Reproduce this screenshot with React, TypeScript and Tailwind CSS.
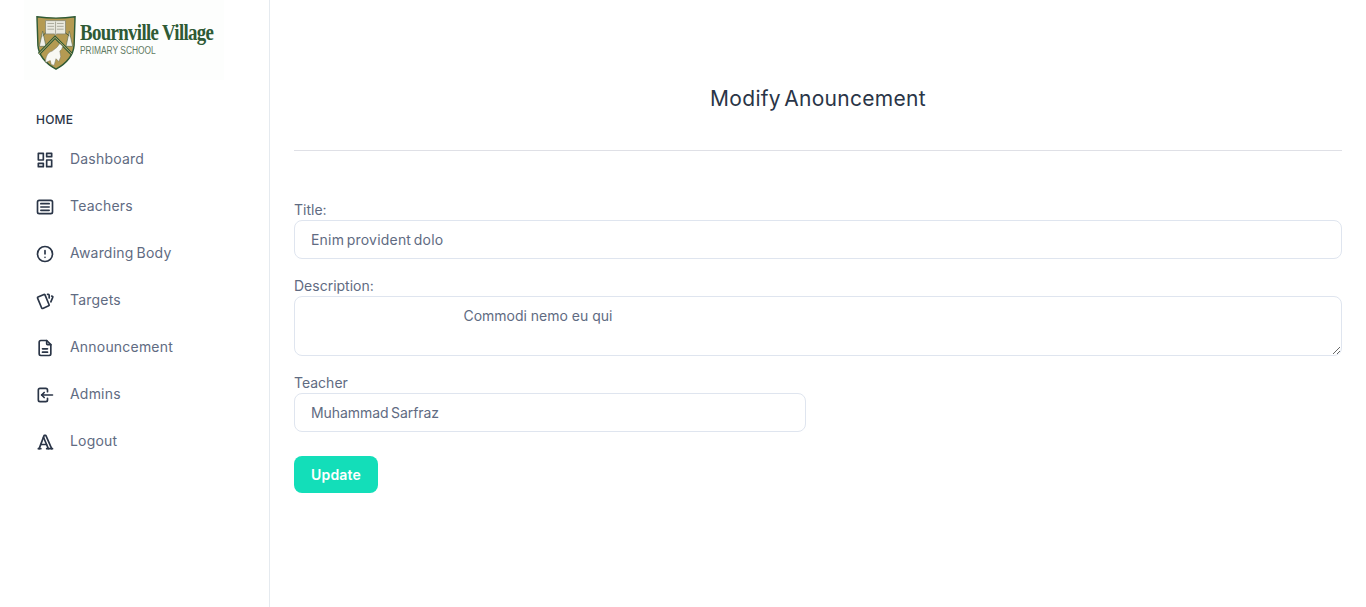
import React from 'react';
import {
  TbAlertCircle,
  TbArticle,
  TbCards,
  TbFileDescription,
  TbLogin,
  TbTypography,
} from 'react-icons/tb';

const DashboardIcon = ({ className }: { className?: string }) => (
  <svg viewBox="0 0 24 24" fill="none" stroke="currentColor" strokeWidth="2" strokeLinecap="round" strokeLinejoin="round" className={className}>
    <path d="M4 4h6v8h-6z" />
    <path d="M4 16h6v4h-6z" />
    <path d="M14 12h6v8h-6z" />
    <path d="M14 4h6v4h-6z" />
  </svg>
);

const menu = [
  { label: 'Dashboard', icon: DashboardIcon },
  { label: 'Teachers', icon: TbArticle },
  { label: 'Awarding Body', icon: TbAlertCircle },
  { label: 'Targets', icon: TbCards },
  { label: 'Announcement', icon: TbFileDescription },
  { label: 'Admins', icon: TbLogin },
  { label: 'Logout', icon: TbTypography },
];

const Crest = () => (
  <svg width="40" height="58" viewBox="0 1 42 57" className="shrink-0">
    {/* shield */}
    <path d="M1 2 C12 3.500 30 3.500 41 2 L40 32 C39 44 30 52 21 57 C12 52 3 44 2 32 Z" fill="#b49a52" stroke="#2f5a35" strokeWidth="1.500" />
    {/* book */}
    <path d="M10 6 H31 V20 H21.500 L20.500 21.500 L19.500 20 H10 Z" fill="#e9e9df" stroke="#85856f" strokeWidth="0.800" />
    <path d="M12 9 H19 M12 12 H19 M12 15 H19 M22 9 H29 M22 12 H29 M22 15 H29 M20.500 7 V20" stroke="#a2a292" strokeWidth="0.900" />
    {/* tassels */}
    <path d="M7 17 L10.500 33 H3.500 Z M35 17 L38.500 33 H31.500 Z" fill="#f1f1ea" stroke="#5c6d50" strokeWidth="0.700" />
    <path d="M10 19 L7 22 M31 19 L35 22" stroke="#4a5a3c" strokeWidth="1" />
    {/* chevron */}
    <path d="M3 41 L20 23.500 L37.500 41" fill="none" stroke="#2f5a35" strokeWidth="3" />
    <path d="M3 41 L20 23.500 L37.500 41" fill="none" stroke="#c9b676" strokeWidth="1" />
    {/* goat */}
    <path d="M10 50 C10 43 13 39 17 38 L22 34 L25 30 L28 33 L27 36 L25 38 L26 44 L24 49 L21 46 L19 53 L16 52 L15 48 Z" fill="#f8f8f3" stroke="#6e6e5c" strokeWidth="0.500" />
  </svg>
);

export default function App() {
  return (
    <div className="flex min-h-[607px] bg-white font-['Inter',sans-serif] text-sm text-[#5f6b82]">
      <aside className="w-[270px] shrink-0 border-r border-[#e5eaef]">
        {/* logo */}
        <div className="ml-6 flex h-20 w-[200px] items-start gap-1 bg-[#fdfefd] pt-[14px] pl-[12px]">
          <Crest />
          <div className="flex flex-col">
            <span className="mt-[6px] origin-left scale-x-[0.82] font-['Liberation_Serif',serif] text-[23px] leading-[25px] font-bold tracking-[-0.8px] whitespace-nowrap text-[#2f5a35]">
              Bournville Village
            </span>
            <span className="origin-left scale-x-[0.84] font-['Liberation_Sans',sans-serif] text-[10px] leading-[11px] whitespace-nowrap text-[#5f7a62]">
              PRIMARY SCHOOL
            </span>
          </div>
        </div>

        <div className="mt-8 pl-9">
          <h5 className="text-xs leading-4 font-medium tracking-[0.2px] text-[#2a3547]">HOME</h5>
          <nav className="mt-2 flex flex-col">
            {menu.map(({ label, icon: Icon }) => (
              <div key={label} className="flex h-[47px] items-center gap-[14px]">
                <Icon className="size-[20px] -translate-x-[1px] text-[#2a3547]" />
                <span className="-translate-y-[1px] text-sm leading-5 tracking-[0.2px] [word-spacing:-1px]">{label}</span>
              </div>
            ))}
          </nav>
        </div>
      </aside>

      <main className="flex-1 px-6">
        <h2 className="pt-[85px] text-center text-[21px] leading-7 font-normal tracking-[0.3px] text-[#2a3547] [word-spacing:-3px]">
          Modify Anouncement
        </h2>
        <hr className="mt-[37px] border-[#dfe0e6]" />

        <form className="mt-[50px] flex flex-col">
          <label className="text-sm leading-[18px]">Title:</label>
          <input
            readOnly
            defaultValue="Enim provident dolo"
            className="mt-[1px] h-[39px] w-full rounded-lg border border-[#dfe5ef] px-4 text-sm tracking-[0.2px] text-[#5f6b82] outline-none [word-spacing:-1.500px]"
          />

          <label className="mt-[18px] text-sm leading-[18px]">Description:</label>
          <textarea
            readOnly
            defaultValue="                                       Commodi nemo eu qui"
            className="mt-[1px] h-[60px] w-full rounded-lg border border-[#dfe5ef] px-4 py-[9px] text-sm leading-5 text-[#5f6b82] outline-none [word-spacing:-0.03px]"
          />

          <label className="mt-[18px] text-sm leading-[18px]">Teacher</label>
          <input
            readOnly
            defaultValue="Muhammad Sarfraz"
            className="mt-[1px] h-[39px] w-[512px] rounded-lg border border-[#dfe5ef] px-4 text-sm tracking-[-0.05px] text-[#5f6b82] outline-none [word-spacing:-1.500px]"
          />

          <button
            type="button"
            className="mt-6 h-[37px] w-[84px] rounded-lg bg-[#13deb9] text-sm font-semibold tracking-[0.2px] text-white"
          >
            Update
          </button>
        </form>
      </main>
    </div>
  );
}
